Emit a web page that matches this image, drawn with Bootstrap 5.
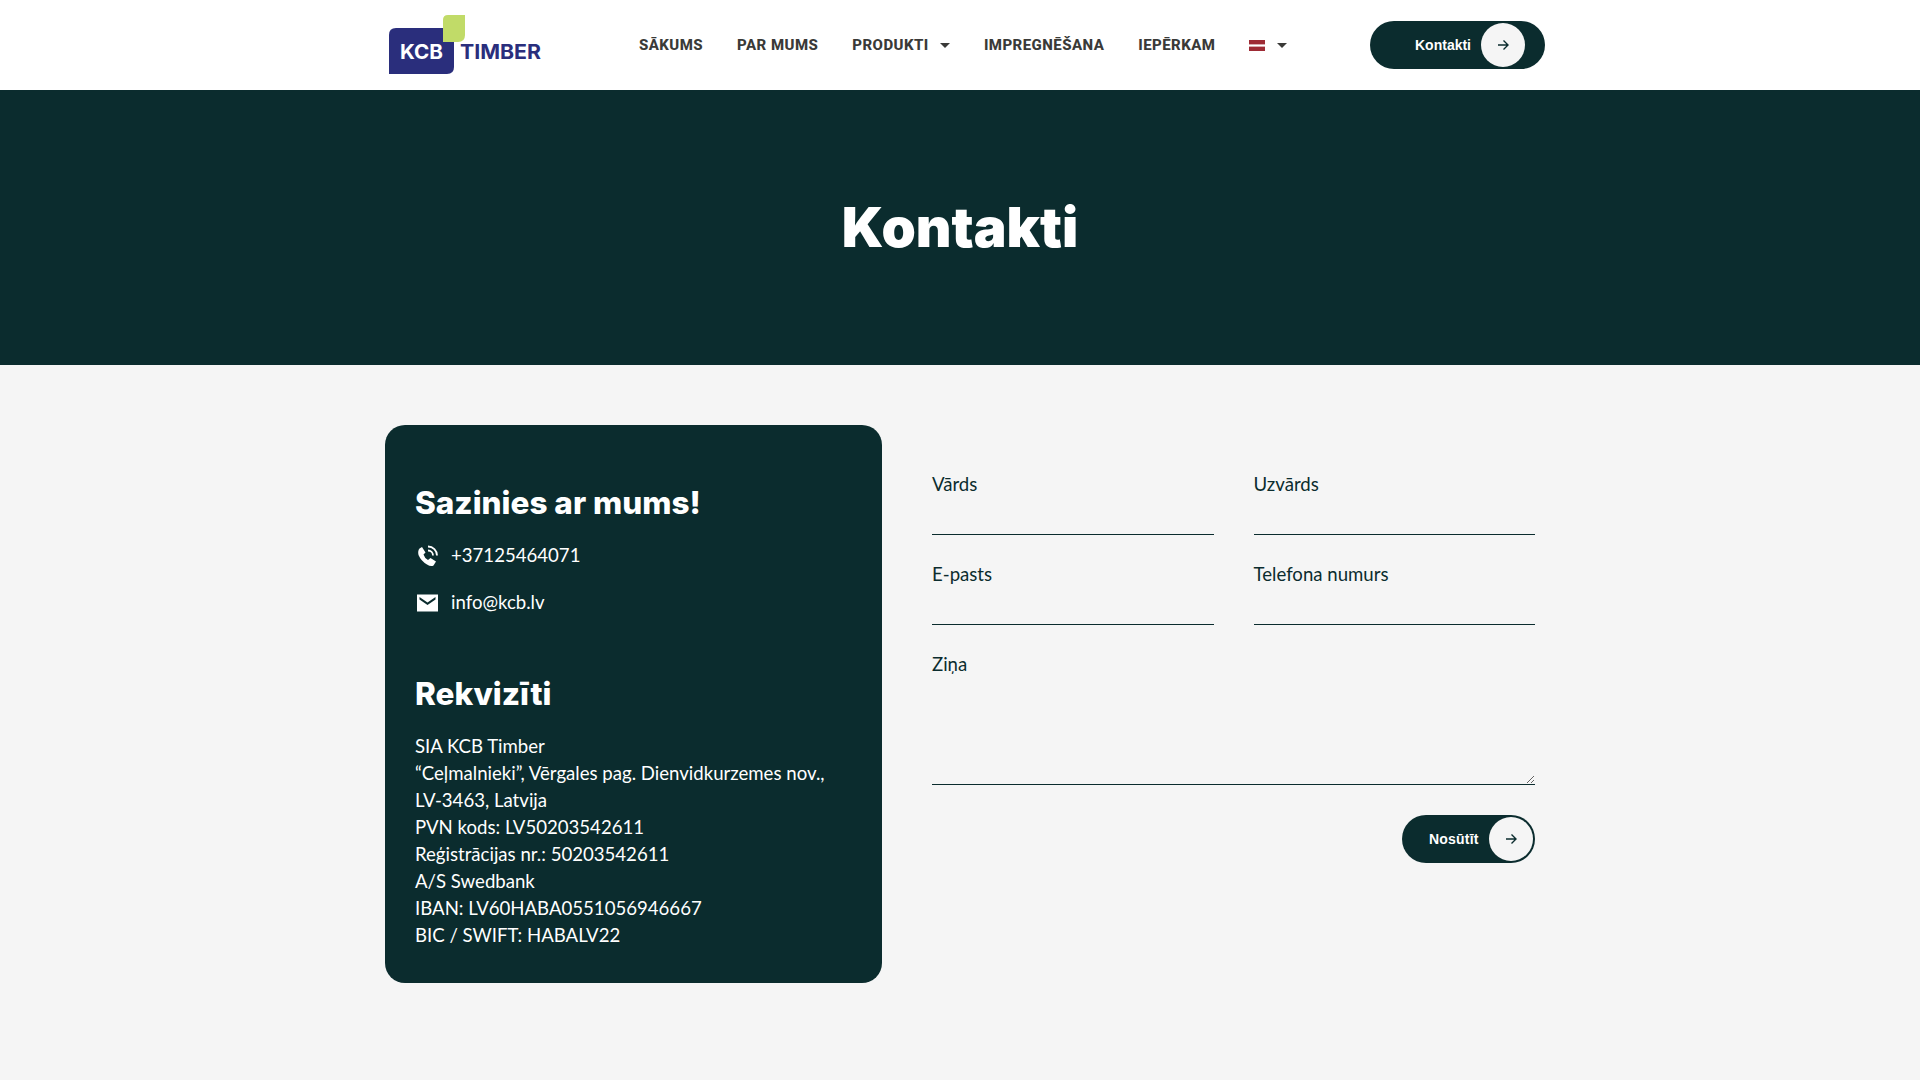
<!DOCTYPE html>
<html lang="lv">
<head>
    <meta charset="UTF-8">
    <meta name="viewport" content="width=device-width, initial-scale=1.0">
    <title>Kontakti</title>
    <link href="https://cdn.jsdelivr.net/npm/bootstrap@5.3.0/dist/css/bootstrap.min.css" rel="stylesheet">
    <style>
        body { background: #f5f5f5; color: #0b2c2e; font-family: "Lato", "Noto Sans", sans-serif; font-size: 18.6px; height: 1080px; overflow: hidden; }
        .top { height: 90px; background: #fff; }
        .wrap { width: 1150px; margin: 0 auto; }
        .logo { width: 155px; height: 62px; margin-left: 3px; margin-top: 2px; }
        .menu { margin-left: 96px; gap: 34px; }
        .menu a { font-family: "Roboto", "Liberation Sans", sans-serif; font-weight: 800; font-size: 15px; letter-spacing: .45px; color: #3a3a38; text-decoration: none; white-space: nowrap; }
        .caret { display: inline-block; width: 0; height: 0; border-left: 5px solid transparent; border-right: 5px solid transparent; border-top: 5px solid #3a3a38; margin-left: 7px; vertical-align: 2px; }
        .flag { display: inline-block; width: 16px; height: 11px; vertical-align: -1px; }
        .pill { background: #0b2c2e; color: #fff; border: 0; border-radius: 24px; font-family: "Liberation Sans", sans-serif; font-weight: 700; font-size: 14px; padding: 0; }
        .pill .dot { background: #f5f5f5; border-radius: 50%; display: flex; align-items: center; justify-content: center; width: 44px; height: 44px; }
        .pill-top { width: 175px; height: 48px; margin-left: auto; margin-right: -10px; }
        .pill-top .lbl { margin-left: 45px; margin-right: 10px; }
        .hero { height: 275px; background: #0b2c2e; }
        .hero h1 { font-family: "Inter", sans-serif; font-weight: 900; font-size: 55px; line-height: 66px; color: #fff; margin: -2px 0 0; }
        .content { margin-top: 60px; gap: 50px; }
        .info { width: 497px; height: 558px; background: #0b2c2e; color: #fff; border-radius: 20px; padding: 59px 30px 0; flex: none; }
        .info h2 { font-family: "Inter", sans-serif; font-weight: 800; font-size: 31.5px; line-height: 38px; margin: 0; }
        .contact-row { gap: 12px; height: 47px; }
        .contact-row svg { width: 24px; height: 24px; flex: none; }
        .first-row { margin-top: 10px; }
        .last-row { margin-bottom: 49px; }
        .details { line-height: 27px; margin: 20px 0 0; }
        .form-area { width: 603px; padding-top: 47px; }
        .form-row { --bs-gutter-x: 40px; margin-bottom: 27px; }
        .form-area label { display: block; line-height: 24px; margin-bottom: 0; }
        .form-area .form-control { background: transparent; border: 0; border-bottom: 1px solid #0b2c2e; border-radius: 0; box-shadow: none; padding: 0; height: 39px; }
        .form-area textarea.form-control { height: 109px; margin-bottom: 30px; }
        .pill-send { width: 133px; height: 48px; }
        .pill-send .lbl { margin-left: 27px; margin-right: 10px; letter-spacing: .2px; }
    </style>
</head>
<body>
    <header class="top">
        <div class="wrap d-flex align-items-center h-100">
            <svg class="logo" viewBox="0 0 155 62">
                <path d="M55 5 Q55 0 60 0 H77 V20 Q77 27 70 27 H55 Z" fill="#c1db68"/>
                <path d="M8 13 H55 V27 H66 V52 Q66 59 59 59 H1 V20 Q1 13 8 13 Z" fill="#2a2e7c"/>
                <text x="12" y="44" font-family="Inter, sans-serif" font-weight="700" font-size="20" fill="#fff" textLength="43" lengthAdjust="spacingAndGlyphs">KCB</text>
                <text x="72" y="44" font-family="Inter, sans-serif" font-weight="700" font-size="20" fill="#2a2e7c" textLength="81" lengthAdjust="spacingAndGlyphs">TIMBER</text>
            </svg>
            <nav class="menu d-flex align-items-center">
                <a href="#">SĀKUMS</a>
                <a href="#">PAR MUMS</a>
                <a href="#">PRODUKTI <span class="caret"></span></a>
                <a href="#">IMPREGNĒŠANA</a>
                <a href="#">IEPĒRKAM</a>
                <a href="#"><svg class="flag" viewBox="0 0 16 11"><rect width="16" height="11" fill="#9e2b35"/><rect y="4.4" width="16" height="2.2" fill="#fff"/></svg> <span class="caret"></span></a>
            </nav>
            <button class="pill pill-top d-flex align-items-center" type="button">
                <span class="lbl">Kontakti</span>
                <span class="dot"><svg width="14" height="14" viewBox="0 0 14 14" fill="none" stroke="#0b2c2e" stroke-width="1.4"><path d="M2 7 H12 M7.5 2.5 L12 7 L7.5 11.5"/></svg></span>
            </button>
        </div>
    </header>

    <section class="hero d-flex align-items-center justify-content-center">
        <h1>Kontakti</h1>
    </section>

    <main class="wrap content d-flex align-items-start">
        <div class="info">
            <h2>Sazinies ar mums!</h2>
            <div class="contact-row first-row d-flex align-items-center">
                <svg viewBox="0 0 24 24" fill="#fff"><path d="M7 3 L10.5 8.5 L8.5 10.5 Q9.5 14 13 16 L15.5 14 L21 17.5 L18.5 21.5 Q16 23 12 20.5 Q6 17 3.5 11 Q2.5 7 4.5 4.5 Z"/><path d="M13 2.5 A9 9 0 0 1 22 11.5 M13 6.5 A5 5 0 0 1 18 11.5" fill="none" stroke="#fff" stroke-width="1.8"/></svg>
                <span>+37125464071</span>
            </div>
            <div class="contact-row last-row d-flex align-items-center">
                <svg viewBox="0 0 24 24" fill="#fff"><path d="M2 3.5 H23 V20.5 H2 Z M4.5 6 L12.5 11.5 L20.5 6 V8.5 L12.5 14 L4.5 8.5 Z" fill-rule="evenodd"/></svg>
                <span>info@kcb.lv</span>
            </div>
            <h2>Rekvizīti</h2>
            <p class="details">SIA KCB Timber<br>“Ceļmalnieki”, Vērgales pag. Dienvidkurzemes nov.,<br>LV-3463, Latvija<br>PVN kods: LV50203542611<br>Reģistrācijas nr.: 50203542611<br>A/S Swedbank<br>IBAN: LV60HABA0551056946667<br>BIC / SWIFT: HABALV22</p>
        </div>
        <form class="form-area">
            <div class="row form-row">
                <div class="col-6"><label for="vards">Vārds</label><input id="vards" class="form-control" type="text"></div>
                <div class="col-6"><label for="uzvards">Uzvārds</label><input id="uzvards" class="form-control" type="text"></div>
            </div>
            <div class="row form-row">
                <div class="col-6"><label for="epasts">E-pasts</label><input id="epasts" class="form-control" type="email"></div>
                <div class="col-6"><label for="tel">Telefona numurs</label><input id="tel" class="form-control" type="tel"></div>
            </div>
            <label for="zina">Ziņa</label>
            <textarea id="zina" class="form-control"></textarea>
            <div class="d-flex justify-content-end">
                <button class="pill pill-send d-flex align-items-center" type="button">
                    <span class="lbl">Nosūtīt</span>
                    <span class="dot"><svg width="14" height="14" viewBox="0 0 14 14" fill="none" stroke="#0b2c2e" stroke-width="1.4"><path d="M2 7 H12 M7.5 2.5 L12 7 L7.5 11.5"/></svg></span>
                </button>
            </div>
        </form>
    </main>
    <script src="https://cdn.jsdelivr.net/npm/bootstrap@5.3.0/dist/js/bootstrap.bundle.min.js"></script>
</body>
</html>
